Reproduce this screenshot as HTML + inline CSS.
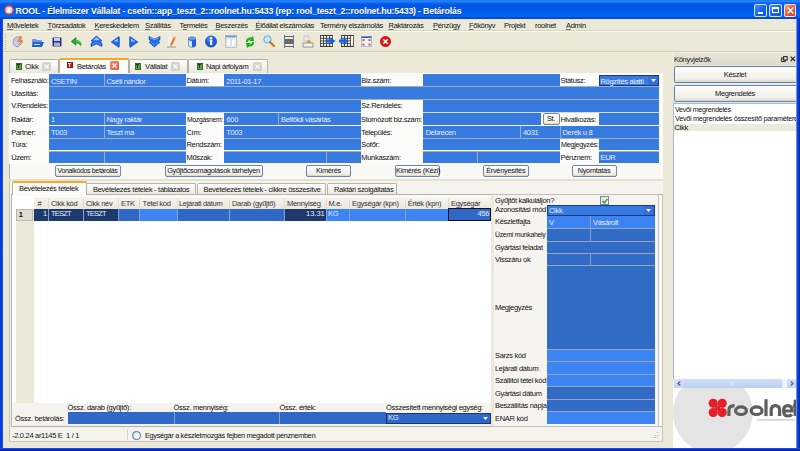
<!DOCTYPE html><html><head><meta charset="utf-8"><style>
*{margin:0;padding:0;box-sizing:border-box}
html,body{width:800px;height:451px;overflow:hidden;background:#ece9d8;position:relative;font-family:"Liberation Sans",sans-serif;font-size:7.5px;letter-spacing:-0.3px;color:#111}
div,span,svg{position:absolute}
.t{white-space:nowrap;line-height:8px}
.w{color:#eef3fc}
.btn{font-size:7.4px;border:1px solid #6a86b0;border-radius:2px;background:linear-gradient(#fdfdfb,#f0efe8 80%,#d8d5c8);text-align:center;line-height:10px;white-space:nowrap}
u{text-decoration:underline;text-decoration-color:#666;text-decoration-thickness:0.6px;text-underline-offset:1px}
</style></head><body>
<div style="left:0px;top:0px;width:800px;height:18.8px;background:linear-gradient(#1a74e0 0px,#2a88ff 1.2px,#0a64f2 3px,#0056e2 5.5px,#005ae8 10px,#0066f8 14.5px,#0062f2 16.5px,#0046d6 18px,#0a48c8 18.8px)"></div>
<svg style="left:4px;top:5px" width="10" height="10"><circle cx="5" cy="5" r="4.3" fill="#c8d8ee" stroke="#e23a2c" stroke-width="1.4"/><path d="M2.5 7.5 Q3 3 7 2.5 Q5 5 6.5 7.5Z" fill="#f4f8ff"/></svg>
<span class="t" style="left:15.5px;top:6.6px;color:#fff;font-weight:bold;font-size:8.8px;letter-spacing:-0.2px;line-height:9px;text-shadow:0.6px 0.6px 0 #0a3aa0">ROOL - Élelmiszer Vállalat - csetin::app_teszt_2::roolnet.hu:5433 (rep: rool_teszt_2::roolnet.hu:5433) - Betárolás</span>
<div style="left:754.3px;top:3.8px;width:12.6px;height:12.8px;border:1px solid rgba(255,255,255,.8);border-radius:2px;background:linear-gradient(135deg,#4a90ff,#1862f0 55%,#0c52dc)"></div>
<div style="left:769.3px;top:3.8px;width:12.6px;height:12.8px;border:1px solid rgba(255,255,255,.8);border-radius:2px;background:linear-gradient(135deg,#4a90ff,#1862f0 55%,#0c52dc)"></div>
<div style="left:783.6px;top:3.8px;width:12.6px;height:12.8px;border:1px solid rgba(255,255,255,.8);border-radius:2px;background:linear-gradient(135deg,#f4a486,#e45c34 50%,#d04424)"></div>
<div style="left:757.5px;top:11.5px;width:5px;height:2px;background:#fff"></div>
<div style="left:772.3px;top:6.8px;width:6.6px;height:6.6px;border:1px solid #fff;border-top-width:2px"></div>
<svg style="left:786.8px;top:7px" width="7" height="7"><path d="M0.6 0.6L6.4 6.4M6.4 0.6L0.6 6.4" stroke="#fff" stroke-width="1.4"/></svg>
<span class="t" style="left:7px;top:21.6px;"><u>M</u>űveletek</span>
<span class="t" style="left:47.5px;top:21.6px;"><u>T</u>örzsadatok</span>
<span class="t" style="left:94.5px;top:21.6px;"><u>K</u>ereskedelem</span>
<span class="t" style="left:145px;top:21.6px;"><u>S</u>zállítás</span>
<span class="t" style="left:179.5px;top:21.6px;">T<u>e</u>rmelés</span>
<span class="t" style="left:215.5px;top:21.6px;"><u>B</u>eszerzés</span>
<span class="t" style="left:255.5px;top:21.6px;"><u>É</u>lőállat elszámolás</span>
<span class="t" style="left:320px;top:21.6px;">Termény elszámolás</span>
<span class="t" style="left:388.5px;top:21.6px;"><u>R</u>aktározás</span>
<span class="t" style="left:433px;top:21.6px;"><u>P</u>énzügy</span>
<span class="t" style="left:469px;top:21.6px;"><u>F</u>őkönyv</span>
<span class="t" style="left:504px;top:21.6px;">Projekt</span>
<span class="t" style="left:535px;top:21.6px;">roolnet</span>
<span class="t" style="left:566px;top:21.6px;"><u>A</u>dmin</span>
<div style="left:3px;top:30px;width:794px;height:1px;background:#d8d4c0"></div>
<div style="left:3px;top:31px;width:794px;height:1px;background:#fbfaf5"></div>
<div style="left:3px;top:51.2px;width:794px;height:1.0px;background:#cfcbb8"></div>
<div style="left:3px;top:52.2px;width:794px;height:1.0px;background:#f1eee2"></div>
<div style="left:5px;top:34px;width:1px;height:1px;background:#b8b4a0"></div>
<div style="left:5px;top:36px;width:1px;height:1px;background:#b8b4a0"></div>
<div style="left:5px;top:38px;width:1px;height:1px;background:#b8b4a0"></div>
<div style="left:5px;top:40px;width:1px;height:1px;background:#b8b4a0"></div>
<div style="left:5px;top:42px;width:1px;height:1px;background:#b8b4a0"></div>
<div style="left:5px;top:44px;width:1px;height:1px;background:#b8b4a0"></div>
<div style="left:5px;top:46px;width:1px;height:1px;background:#b8b4a0"></div>
<div style="left:5px;top:48px;width:1px;height:1px;background:#b8b4a0"></div>
<svg style="left:12px;top:35px" width="13" height="13" viewBox="0 0 13 13"><path d="M2 4 Q6 0 10 3 L8 6 L11 7 L6 12 Q1 11 1 7Z" fill="#c8c8f0" stroke="#8a8ac8" stroke-width="0.8"/><path d="M8 1 L5 7 L8 7 L6 12 L11 5 L8 5 L10 1Z" fill="#f08a18"/></svg>
<svg style="left:31px;top:36px" width="13" height="12" viewBox="0 0 13 12"><path d="M1 3 h4 l1 1 h5 v7 h-10z" fill="#6a9ae8"/><path d="M2 6 h11 l-2 5 h-10z" fill="#1f5fe0"/><rect x="3" y="8" width="6" height="1" fill="#cfe0ff"/><path d="M6 1 l4 0 l0 2z" fill="#d0e0f8"/></svg>
<svg style="left:52px;top:37px" width="10" height="10" viewBox="0 0 10 10"><rect x="0.5" y="0.5" width="9" height="9" rx="1" fill="#28307a"/><rect x="2" y="1" width="6" height="3" fill="#c8d0ee"/><rect x="2" y="5.5" width="6" height="3.5" fill="#a8b0d8"/></svg>
<svg style="left:70px;top:35px" width="13" height="13" viewBox="0 0 13 13"><path d="M11 10.5 Q11.5 5.5 6 5.2 L6 2.5 L1.2 6.5 L6 10.2 L6 7.8 Q9 7.8 11 10.5Z" fill="#20b020" stroke="#0a7a0a" stroke-width="0.6" stroke-linejoin="round"/><path d="M6 5.8 Q9.5 6 10.5 8.5" stroke="#a0f0a0" stroke-width="0.6" fill="none"/></svg>
<svg style="left:89.5px;top:35px" width="13" height="13" viewBox="0 0 13 13"><path d="M6.5 1 L12 5.8 L10 6.6 L12 8.4 L12 11.6 L6.5 9 L1 11.6 L1 8.4 L3 6.6 L1 5.8Z" fill="#1e6ae8" stroke="#0c44b8" stroke-width="0.6" stroke-linejoin="round"/><path d="M6.5 2.2 L10 5.2 L3 5.2Z" fill="#9cc8ff"/><path d="M2 9.5 L6.5 7.3 L11 9.5" stroke="#7cb0ff" stroke-width="0.6" fill="none"/></svg>
<svg style="left:110px;top:35.5px" width="10" height="12" viewBox="0 0 10 12"><path d="M1.2 6 L8.6 0.8 Q9.3 0.6 9.3 1.5 L9.3 10.5 Q9.3 11.4 8.6 11.2Z" fill="#1e6ae8" stroke="#0c44b8" stroke-width="0.7" stroke-linejoin="round"/><path d="M3.5 5.5 L8 2.5 L8 5.5Z" fill="#a0c8ff"/></svg>
<svg style="left:129px;top:35.5px" width="10" height="12" viewBox="0 0 10 12"><path d="M8.8 6 L1.4 0.8 Q0.7 0.6 0.7 1.5 L0.7 10.5 Q0.7 11.4 1.4 11.2Z" fill="#1e6ae8" stroke="#0c44b8" stroke-width="0.7" stroke-linejoin="round"/><path d="M2 2.5 L6.5 5.5 L2 5.5Z" fill="#a0c8ff"/></svg>
<svg style="left:147.5px;top:35px" width="13" height="13" viewBox="0 0 13 13"><path d="M6.5 12 L12 7.2 L10 6.4 L12 4.6 L12 1.4 L6.5 4 L1 1.4 L1 4.6 L3 6.4 L1 7.2Z" fill="#1e6ae8" stroke="#0c44b8" stroke-width="0.6" stroke-linejoin="round"/><path d="M2 2.6 L6.5 4.8 L11 2.6" stroke="#9cc8ff" stroke-width="0.8" fill="none"/><path d="M3 7.4 L6.5 9.6 L10 7.4" stroke="#7cb0ff" stroke-width="0.6" fill="none"/></svg>
<svg style="left:167px;top:35px" width="10" height="13" viewBox="0 0 10 13"><rect x="1" y="2" width="7" height="10" fill="#f4f2f8"/><path d="M3 10 L7 1 L9 2 L5 11Z" fill="#f07a10"/><path d="M7 1 L9 2 L8.5 3 L6.5 2Z" fill="#e0e0e0"/><rect x="0" y="11.5" width="9" height="1" fill="#909090"/></svg>
<svg style="left:187px;top:36px" width="10" height="12" viewBox="0 0 10 12"><path d="M1 2 Q5 -1 9 2 L9 10 Q5 13 1 10Z" fill="#1f5fd8"/><ellipse cx="5" cy="2.2" rx="4" ry="1.6" fill="#6a9af0"/><path d="M1.5 4 Q3 5 5 5 L5 11 Q3 11 1.5 10Z" fill="#d8e6fa"/></svg>
<svg style="left:205px;top:35px" width="12" height="13" viewBox="0 0 12 13"><circle cx="6" cy="6.5" r="5.6" fill="#1a5fe0" stroke="#0a3aa0" stroke-width="0.6"/><circle cx="5" cy="4.5" r="3" fill="#5a9aff" opacity="0.6"/><rect x="5" y="5" width="2.2" height="5" fill="#fff"/><circle cx="6.1" cy="3.2" r="1.2" fill="#fff"/></svg>
<svg style="left:225px;top:35px" width="12" height="13" viewBox="0 0 12 13"><rect x="0.5" y="0.5" width="11" height="12" fill="#f2f2f2" stroke="#b0b8c8" stroke-width="0.8"/><rect x="0.5" y="0.5" width="11" height="2" fill="#7a9ae0"/><rect x="2" y="4" width="3.5" height="7" fill="#fff" stroke="#c8c8c8" stroke-width="0.5"/><rect x="6.5" y="4" width="3.5" height="7" fill="#fff" stroke="#c8c8c8" stroke-width="0.5"/></svg>
<svg style="left:244px;top:36px" width="12" height="12" viewBox="0 0 12 12"><path d="M2 6 Q2 1 7 1.5 L9 0 L10 5 L5 5 L7 3.5 Q4 3 4 6Z" fill="#18b018"/><path d="M10 6 Q10 11 5 10.5 L3 12 L2 7 L7 7 L5 8.5 Q8 9 8 6Z" fill="#18b018"/></svg>
<svg style="left:263px;top:35px" width="12" height="13" viewBox="0 0 12 13"><circle cx="4.5" cy="4.5" r="3.7" fill="#bfe8ff" stroke="#6aa8d8" stroke-width="1"/><path d="M7 7 L11 11" stroke="#c87830" stroke-width="2.4" stroke-linecap="round"/></svg>
<svg style="left:283px;top:35px" width="12" height="13" viewBox="0 0 12 13"><rect x="1" y="1" width="10" height="1" fill="#606080"/><rect x="1" y="11" width="10" height="1" fill="#606080"/><rect x="1" y="4" width="10" height="5" fill="#6a6a6a"/><rect x="1" y="0" width="1" height="13" fill="#7070a0"/><rect x="10" y="0" width="1" height="13" fill="#7070a0"/></svg>
<svg style="left:302px;top:35px" width="12" height="13" viewBox="0 0 12 13"><rect x="2" y="1" width="5" height="5" fill="#e8e8ee" stroke="#a8a8b8" stroke-width="0.5"/><circle cx="7" cy="7" r="2" fill="#f0a020"/><rect x="1" y="8" width="10" height="4" fill="#f0f0f0" stroke="#808080" stroke-width="0.8"/></svg>
<svg style="left:320px;top:35px" width="17" height="12" viewBox="0 0 17 12"><rect x="0" y="0" width="13" height="12" fill="#3a3a30"/><rect x="0.8" y="1.0" width="2.2" height="1.8" fill="#f8f8f0"/><rect x="0.8" y="3.7" width="2.2" height="1.8" fill="#f8f8f0"/><rect x="0.8" y="6.4" width="2.2" height="1.8" fill="#f8f8f0"/><rect x="0.8" y="9.100000000000001" width="2.2" height="1.8" fill="#f8f8f0"/><rect x="3.9000000000000004" y="1.0" width="2.2" height="1.8" fill="#f8f8f0"/><rect x="3.9000000000000004" y="3.7" width="2.2" height="1.8" fill="#f8f8f0"/><rect x="3.9000000000000004" y="6.4" width="2.2" height="1.8" fill="#f8f8f0"/><rect x="3.9000000000000004" y="9.100000000000001" width="2.2" height="1.8" fill="#f8f8f0"/><rect x="7.0" y="1.0" width="2.2" height="1.8" fill="#f8f8f0"/><rect x="7.0" y="3.7" width="2.2" height="1.8" fill="#f8f8f0"/><rect x="7.0" y="6.4" width="2.2" height="1.8" fill="#f8f8f0"/><rect x="7.0" y="9.100000000000001" width="2.2" height="1.8" fill="#f8f8f0"/><rect x="10.100000000000001" y="1.0" width="2.2" height="1.8" fill="#f8f8f0"/><rect x="10.100000000000001" y="3.7" width="2.2" height="1.8" fill="#f8f8f0"/><rect x="10.100000000000001" y="6.4" width="2.2" height="1.8" fill="#f8f8f0"/><rect x="10.100000000000001" y="9.100000000000001" width="2.2" height="1.8" fill="#f8f8f0"/><path d="M5.5 4.6 H10.5 V2.6 L15.5 6 L10.5 9.4 V7.4 H5.5Z" fill="#1060f0"/></svg>
<svg style="left:338px;top:35px" width="17" height="12" viewBox="0 0 17 12"><g transform="translate(3,0)"><rect x="0" y="0" width="13" height="12" fill="#3a3a30"/><rect x="0.8" y="1.0" width="2.2" height="1.8" fill="#f8f8f0"/><rect x="0.8" y="3.7" width="2.2" height="1.8" fill="#f8f8f0"/><rect x="0.8" y="6.4" width="2.2" height="1.8" fill="#f8f8f0"/><rect x="0.8" y="9.100000000000001" width="2.2" height="1.8" fill="#f8f8f0"/><rect x="3.9000000000000004" y="1.0" width="2.2" height="1.8" fill="#f8f8f0"/><rect x="3.9000000000000004" y="3.7" width="2.2" height="1.8" fill="#f8f8f0"/><rect x="3.9000000000000004" y="6.4" width="2.2" height="1.8" fill="#f8f8f0"/><rect x="3.9000000000000004" y="9.100000000000001" width="2.2" height="1.8" fill="#f8f8f0"/><rect x="7.0" y="1.0" width="2.2" height="1.8" fill="#f8f8f0"/><rect x="7.0" y="3.7" width="2.2" height="1.8" fill="#f8f8f0"/><rect x="7.0" y="6.4" width="2.2" height="1.8" fill="#f8f8f0"/><rect x="7.0" y="9.100000000000001" width="2.2" height="1.8" fill="#f8f8f0"/><rect x="10.100000000000001" y="1.0" width="2.2" height="1.8" fill="#f8f8f0"/><rect x="10.100000000000001" y="3.7" width="2.2" height="1.8" fill="#f8f8f0"/><rect x="10.100000000000001" y="6.4" width="2.2" height="1.8" fill="#f8f8f0"/><rect x="10.100000000000001" y="9.100000000000001" width="2.2" height="1.8" fill="#f8f8f0"/><rect x="10" y="2" width="2" height="8" fill="#fff"/></g><path d="M1 4.6 H5.5 V2.6 L10.5 6 L5.5 9.4 V7.4 H1Z" fill="#1060f0"/></svg>
<svg style="left:361px;top:36px" width="11" height="11" viewBox="0 0 11 11"><rect x="0.5" y="0.5" width="10" height="10" fill="#f4f4fa" stroke="#9ab0e0" stroke-width="0.8"/><rect x="0.5" y="0.5" width="10" height="1.5" fill="#2a5ad8"/><rect x="1.5" y="3" width="2" height="2" fill="#e05030"/><rect x="7.5" y="3" width="2" height="2" fill="#e05030"/><rect x="1.5" y="7.5" width="2" height="2" fill="#e05030"/><rect x="7.5" y="7.5" width="2" height="2" fill="#e05030"/></svg>
<svg style="left:380px;top:36px" width="11" height="11" viewBox="0 0 11 11"><circle cx="5.5" cy="5.5" r="5.2" fill="#e41010" stroke="#b00000" stroke-width="0.5"/><path d="M3.3 3.3 L7.7 7.7 M7.7 3.3 L3.3 7.7" stroke="#fff" stroke-width="1.6"/></svg>
<div style="left:9px;top:59px;width:50px;height:14px;border:1px solid #b0b0a4;border-bottom:none;border-radius:2px 2px 0 0;background:linear-gradient(#fdfdfc,#f2f1eb 60%,#e8e6dc)"></div>
<div style="left:16px;top:62.8px;width:5.6px;height:6.8px;background:#58a848;border:0.6px solid rgba(0,0,0,.35)"></div>
<div style="left:17.3px;top:64.39999999999999px;width:3px;height:1px;background:#203818"></div>
<div style="left:18.3px;top:64.39999999999999px;width:1px;height:3.8px;background:#203818"></div>
<span class="t" style="left:25px;top:62.8px;">Cikk</span>
<div style="left:42px;top:62px;width:9px;height:8.6px;background:#d6d2c6;border-radius:1.5px"></div>
<svg style="left:44px;top:63.8px" width="5" height="5"><path d="M0.5 0.5L4.5 4.5M4.5 0.5L0.5 4.5" stroke="#fff" stroke-width="1.1"/></svg>
<div style="left:129px;top:59px;width:59px;height:14px;border:1px solid #b0b0a4;border-bottom:none;border-radius:2px 2px 0 0;background:linear-gradient(#fdfdfc,#f2f1eb 60%,#e8e6dc)"></div>
<div style="left:135px;top:62.8px;width:5.6px;height:6.8px;background:#58a848;border:0.6px solid rgba(0,0,0,.35)"></div>
<div style="left:136.3px;top:64.39999999999999px;width:3px;height:1px;background:#203818"></div>
<div style="left:137.3px;top:64.39999999999999px;width:1px;height:3.8px;background:#203818"></div>
<span class="t" style="left:145px;top:62.8px;">Vállalat</span>
<div style="left:171px;top:62px;width:9px;height:8.6px;background:#d6d2c6;border-radius:1.5px"></div>
<svg style="left:173px;top:63.8px" width="5" height="5"><path d="M0.5 0.5L4.5 4.5M4.5 0.5L0.5 4.5" stroke="#fff" stroke-width="1.1"/></svg>
<div style="left:188px;top:59px;width:80px;height:14px;border:1px solid #b0b0a4;border-bottom:none;border-radius:2px 2px 0 0;background:linear-gradient(#fdfdfc,#f2f1eb 60%,#e8e6dc)"></div>
<div style="left:197px;top:62.8px;width:5.6px;height:6.8px;background:#58a848;border:0.6px solid rgba(0,0,0,.35)"></div>
<div style="left:198.3px;top:64.39999999999999px;width:3px;height:1px;background:#203818"></div>
<div style="left:199.3px;top:64.39999999999999px;width:1px;height:3.8px;background:#203818"></div>
<span class="t" style="left:206px;top:62.8px;">Napi árfolyam</span>
<div style="left:253px;top:62px;width:9px;height:8.6px;background:#d6d2c6;border-radius:1.5px"></div>
<svg style="left:255px;top:63.8px" width="5" height="5"><path d="M0.5 0.5L4.5 4.5M4.5 0.5L0.5 4.5" stroke="#fff" stroke-width="1.1"/></svg>
<div style="left:58.8px;top:57.8px;width:70px;height:15.5px;border:1px solid #b0b0a4;border-bottom:none;border-radius:2px 2px 0 0;background:#fbfbf9"></div>
<div style="left:59px;top:57.8px;width:69.80000000000001px;height:1.8000000000000043px;background:#f5a830;border-radius:2px 2px 0 0"></div>
<div style="left:67px;top:61.6px;width:5.6px;height:6.8px;background:#c82828;border:0.6px solid rgba(0,0,0,.35)"></div>
<div style="left:68.3px;top:63.2px;width:3px;height:1px;background:#f0d8c8"></div>
<div style="left:69.3px;top:63.2px;width:1px;height:3.8px;background:#f0d8c8"></div>
<span class="t" style="left:77px;top:62.6px;">Betárolás</span>
<div style="left:110px;top:61.2px;width:9px;height:8.6px;background:linear-gradient(135deg,#f08a68,#e05a38);border-radius:1.5px"></div>
<svg style="left:112px;top:63.0px" width="5" height="5"><path d="M0.5 0.5L4.5 4.5M4.5 0.5L0.5 4.5" stroke="#fff" stroke-width="1.1"/></svg>
<div style="left:8.5px;top:72.5px;width:655px;height:107px;border:1px solid #b0aea0;border-top-color:#a8a89c;background:#f8f8f4"></div>
<div style="left:59px;top:72.6px;width:70px;height:1.4000000000000057px;background:#fbfbf8"></div>
<div style="left:9px;top:73px;width:654px;height:91px;background:#fbfbfa"></div>
<div style="left:49px;top:74.4px;width:137px;height:11.799999999999997px;background:#377ae0"></div>
<div style="left:103.8px;top:74.4px;width:1.0px;height:11.799999999999997px;background:#a5adb9"></div>
<span class="t" style="left:51px;top:77.7px;color:#e6edfb">CSETIN</span>
<span class="t" style="left:106.5px;top:77.7px;color:#e6edfb">Cséti nándor</span>
<div style="left:224.3px;top:74.4px;width:136.7px;height:11.799999999999997px;background:#377ae0"></div>
<span class="t" style="left:226.3px;top:77.7px;color:#e6edfb;">2011-01-17</span>
<div style="left:423px;top:74.4px;width:137px;height:11.799999999999997px;background:#377ae0"></div>
<div style="left:598.5px;top:74.6px;width:60.5px;height:11.8px;background:#377ae0;border:1px solid #1a3a88"></div>
<span class="t" style="left:600.5px;top:77.7px;color:#e6edfb">Rögzítés alatti</span>
<div style="left:647.5px;top:75.6px;width:10.5px;height:9.8px;background:#3470d8"></div>
<svg style="left:650.5px;top:79px" width="5" height="3"><path d="M0 0H5L2.5 3Z" fill="#fff"/></svg>
<div style="left:49px;top:87px;width:610px;height:11.599999999999994px;background:#377ae0"></div>
<div style="left:49px;top:99.4px;width:312px;height:12.199999999999989px;background:#377ae0"></div>
<div style="left:423px;top:99.4px;width:236px;height:12.199999999999989px;background:#377ae0"></div>
<div style="left:49px;top:113.2px;width:137px;height:11.599999999999994px;background:#377ae0"></div>
<div style="left:103.8px;top:113.2px;width:1.0px;height:11.599999999999994px;background:#a5adb9"></div>
<span class="t" style="left:51px;top:115.9px;color:#e6edfb">1</span>
<span class="t" style="left:106.5px;top:115.9px;color:#e6edfb">Nagy raktár</span>
<div style="left:224.3px;top:113.2px;width:136.7px;height:11.599999999999994px;background:#377ae0"></div>
<div style="left:277.9px;top:113.2px;width:1.0px;height:11.599999999999994px;background:#a5adb9"></div>
<span class="t" style="left:226.5px;top:115.9px;color:#e6edfb">600</span>
<span class="t" style="left:281px;top:115.9px;color:#e6edfb">Belföldi vásárlás</span>
<div style="left:423px;top:113.2px;width:118px;height:11.599999999999994px;background:#377ae0"></div>
<div class="btn" style="left:542.5px;top:112.5px;width:17px;height:12px;line-height:10px;border-color:#7a88a0">St.</div>
<div style="left:598.5px;top:113.2px;width:60.5px;height:11.599999999999994px;background:#377ae0"></div>
<div style="left:49px;top:126px;width:137px;height:12.099999999999994px;background:#377ae0"></div>
<div style="left:103.8px;top:126px;width:1.0px;height:12.099999999999994px;background:#a5adb9"></div>
<span class="t" style="left:51px;top:129.1px;color:#e6edfb">T003</span>
<span class="t" style="left:106.5px;top:129.1px;color:#e6edfb">Teszt ma</span>
<div style="left:224.3px;top:126px;width:136.7px;height:12.099999999999994px;background:#377ae0"></div>
<span class="t" style="left:226.3px;top:129.1px;color:#e6edfb;">T003</span>
<div style="left:423px;top:126px;width:236px;height:12.099999999999994px;background:#377ae0"></div>
<div style="left:520.3px;top:126px;width:1.0px;height:12.099999999999994px;background:#a5adb9"></div>
<div style="left:559.8px;top:126px;width:1.0px;height:12.099999999999994px;background:#9aa6ba"></div>
<span class="t" style="left:425.5px;top:129.1px;color:#e6edfb">Debrecen</span>
<span class="t" style="left:523px;top:129.1px;color:#e6edfb">4031</span>
<span class="t" style="left:562.5px;top:129.1px;color:#e6edfb">Derék u 8</span>
<div style="left:49px;top:138.9px;width:137px;height:11.599999999999994px;background:#377ae0"></div>
<div style="left:224.3px;top:138.9px;width:136.7px;height:11.599999999999994px;background:#377ae0"></div>
<div style="left:423px;top:138.9px;width:137px;height:11.599999999999994px;background:#377ae0"></div>
<div style="left:598.5px;top:138.9px;width:60.5px;height:11.599999999999994px;background:#377ae0"></div>
<div style="left:49px;top:151.3px;width:137px;height:11.699999999999989px;background:#377ae0"></div>
<div style="left:103.8px;top:151.3px;width:1.0px;height:11.699999999999989px;background:#a5adb9"></div>
<div style="left:224.3px;top:151.3px;width:136.7px;height:11.699999999999989px;background:#377ae0"></div>
<div style="left:326.2px;top:151.3px;width:1.0px;height:11.699999999999989px;background:#a5adb9"></div>
<div style="left:423px;top:151.3px;width:137px;height:11.699999999999989px;background:#377ae0"></div>
<div style="left:477.1px;top:151.3px;width:1.0px;height:11.699999999999989px;background:#a5adb9"></div>
<div style="left:598.5px;top:151.3px;width:60.5px;height:11.699999999999989px;background:#377ae0"></div>
<span class="t" style="left:600.5px;top:154.20000000000002px;color:#e6edfb;">EUR</span>
<div style="left:49px;top:86.2px;width:610px;height:0.7999999999999972px;background:#a5adb9"></div>
<div style="left:49px;top:98.6px;width:610px;height:0.8000000000000114px;background:#a5adb9"></div>
<div style="left:49px;top:111.6px;width:312px;height:1.6000000000000085px;background:#d4d8e0"></div>
<div style="left:423px;top:111.6px;width:236px;height:1.6000000000000085px;background:#d4d8e0"></div>
<div style="left:49px;top:138.1px;width:137px;height:0.8000000000000114px;background:#a5adb9"></div>
<div style="left:224.3px;top:138.1px;width:136.7px;height:0.8000000000000114px;background:#a5adb9"></div>
<div style="left:423px;top:138.1px;width:236px;height:0.8000000000000114px;background:#a5adb9"></div>
<div style="left:49px;top:150.5px;width:137px;height:0.8000000000000114px;background:#a5adb9"></div>
<div style="left:224.3px;top:150.5px;width:136.7px;height:0.8000000000000114px;background:#a5adb9"></div>
<div style="left:423px;top:150.5px;width:137px;height:0.8000000000000114px;background:#a5adb9"></div>
<div style="left:598.5px;top:150.5px;width:60.5px;height:0.8000000000000114px;background:#a5adb9"></div>
<span class="t" style="left:11.2px;top:77.3px;;transform:scaleX(0.96);transform-origin:0 0">Felhasználó:</span>
<span class="t" style="left:11.2px;top:89.7px;">Utasítás:</span>
<span class="t" style="left:11.2px;top:102.3px;">V.Rendelés:</span>
<span class="t" style="left:11.2px;top:115.5px;">Raktár:</span>
<span class="t" style="left:11.2px;top:128.7px;">Partner:</span>
<span class="t" style="left:11.2px;top:141.2px;">Túra:</span>
<span class="t" style="left:11.2px;top:153.8px;">Üzem:</span>
<span class="t" style="left:186.5px;top:77.3px;">Dátum:</span>
<span class="t" style="left:186.5px;top:115.5px;;transform:scaleX(0.9);transform-origin:0 0">Mozgásnem:</span>
<span class="t" style="left:186.5px;top:128.7px;">Cím:</span>
<span class="t" style="left:186.5px;top:141.2px;">Rendszám:</span>
<span class="t" style="left:186.5px;top:153.8px;">Műszak:</span>
<span class="t" style="left:361.3px;top:77.3px;">Biz.szám:</span>
<span class="t" style="left:361.3px;top:102.3px;">Sz.Rendelés:</span>
<span class="t" style="left:361.3px;top:115.5px;;transform:scaleX(0.985);transform-origin:0 0">Stornózott biz.szám:</span>
<span class="t" style="left:361.3px;top:128.7px;">Település:</span>
<span class="t" style="left:361.3px;top:141.2px;">Sofőr:</span>
<span class="t" style="left:361.3px;top:153.8px;">Munkaszám:</span>
<span class="t" style="left:560.5px;top:77.3px;">Státusz:</span>
<span class="t" style="left:560.5px;top:115.5px;">Hivatkozás:</span>
<span class="t" style="left:560.5px;top:141.2px;;transform:scaleX(0.965);transform-origin:0 0">Megjegyzés:</span>
<span class="t" style="left:560.5px;top:153.8px;">Pénznem:</span>
<div class="btn" style="left:54.5px;top:164.5px;width:66.0px;height:12.4px;line-height:10.4px;font-size:7px;letter-spacing:-0.35px">Vonalkódos betárolás</div>
<div class="btn" style="left:164.5px;top:164.5px;width:98.0px;height:12.4px;line-height:10.4px">Gyűjtőcsomagolások tárhelyen</div>
<div class="btn" style="left:306px;top:164.5px;width:45px;height:12.4px;line-height:10.4px">Kimérés</div>
<div class="btn" style="left:395px;top:164.5px;width:44.5px;height:12.4px;line-height:10.4px">Kimérés (Kézi)</div>
<div class="btn" style="left:483px;top:164.5px;width:45.5px;height:12.4px;line-height:10.4px">Érvényesítés</div>
<div class="btn" style="left:571.5px;top:164.5px;width:45.0px;height:12.4px;line-height:10.4px">Nyomtatás</div>
<div style="left:8.5px;top:179.5px;width:655px;height:262px;border:1px solid #c4c2b4;border-top:none;background:#f4f3ee"></div>
<div style="left:9px;top:179px;width:654px;height:1.5px;background:#e6e2cc"></div>
<div style="left:86px;top:182.5px;width:109.5px;height:12px;border:1px solid #b4b4a8;border-bottom:none;border-radius:2px 2px 0 0;background:linear-gradient(#fdfdfc,#f2f1eb 60%,#e8e6dc)"></div>
<span class="t" style="left:93px;top:185.5px;">Bevételezés tételek - táblázatos</span>
<div style="left:197px;top:182.5px;width:128.5px;height:12px;border:1px solid #b4b4a8;border-bottom:none;border-radius:2px 2px 0 0;background:linear-gradient(#fdfdfc,#f2f1eb 60%,#e8e6dc)"></div>
<span class="t" style="left:203.5px;top:185.5px;">Bevételezés tételek - cikkre összesítve</span>
<div style="left:327px;top:182.5px;width:70px;height:12px;border:1px solid #b4b4a8;border-bottom:none;border-radius:2px 2px 0 0;background:linear-gradient(#fdfdfc,#f2f1eb 60%,#e8e6dc)"></div>
<span class="t" style="left:334px;top:185.5px;">Raktári szolgáltatás</span>
<div style="left:11px;top:193.8px;width:652px;height:233px;border:1px solid #b4b4a8;background:#f9f8f5"></div>
<div style="left:12px;top:181px;width:74.5px;height:14px;border:1px solid #b4b4a8;border-bottom:none;border-radius:2px 2px 0 0;background:#fbfbf9"></div>
<div style="left:12.5px;top:181px;width:73.5px;height:2px;background:#f5a830;border-radius:2px 2px 0 0"></div>
<span class="t" style="left:19px;top:185px;">Bevételezés tételek</span>
<div style="left:12px;top:196px;width:479px;height:206.5px;background:#fff"></div>
<div style="left:15.5px;top:209px;width:18.5px;height:193.5px;background:#ebe8d8"></div>
<div style="left:15.8px;top:208.8px;width:17.7px;height:12.199999999999989px;background:#dddcd4;border:1px solid #b8b7ac"></div>
<span class="t" style="left:18.8px;top:211px;font-weight:bold">1</span>
<div style="left:34px;top:197px;width:457px;height:11.6px;background:linear-gradient(#f5f4ee,#ebe9dd)"></div>
<span class="t" style="left:37.5px;top:199.6px;color:#333">#</span>
<span class="t" style="left:51px;top:199.6px;color:#333">Cikk kód</span>
<span class="t" style="left:86px;top:199.6px;color:#333">Cikk név</span>
<span class="t" style="left:121px;top:199.6px;color:#333">ETK</span>
<span class="t" style="left:142.4px;top:199.6px;color:#333">Tétel kód</span>
<span class="t" style="left:179px;top:199.6px;color:#333">Lejárati dátum</span>
<span class="t" style="left:232px;top:199.6px;color:#333">Darab (gyűjtő)</span>
<span class="t" style="left:287px;top:199.6px;color:#333">Mennyiség</span>
<span class="t" style="left:328.6px;top:199.6px;color:#333">M.e.</span>
<span class="t" style="left:352px;top:199.6px;color:#333">Egységár (kpn)</span>
<span class="t" style="left:407.8px;top:199.6px;color:#333">Érték (kpn)</span>
<span class="t" style="left:451px;top:199.6px;color:#333">Egységár</span>
<div style="left:47.9px;top:198.5px;width:1.0px;height:9.5px;background:#dcd9cb"></div>
<div style="left:82.5px;top:198.5px;width:1.0px;height:9.5px;background:#dcd9cb"></div>
<div style="left:117.5px;top:198.5px;width:1.0px;height:9.5px;background:#dcd9cb"></div>
<div style="left:138.5px;top:198.5px;width:1.0px;height:9.5px;background:#dcd9cb"></div>
<div style="left:176.5px;top:198.5px;width:1.0px;height:9.5px;background:#dcd9cb"></div>
<div style="left:229.1px;top:198.5px;width:1.0px;height:9.5px;background:#dcd9cb"></div>
<div style="left:283.9px;top:198.5px;width:1.0px;height:9.5px;background:#dcd9cb"></div>
<div style="left:325.5px;top:198.5px;width:1.0px;height:9.5px;background:#dcd9cb"></div>
<div style="left:349.2px;top:198.5px;width:1.0px;height:9.5px;background:#dcd9cb"></div>
<div style="left:405.1px;top:198.5px;width:1.0px;height:9.5px;background:#dcd9cb"></div>
<div style="left:447.9px;top:198.5px;width:1.0px;height:9.5px;background:#dcd9cb"></div>
<div style="left:34px;top:208.6px;width:14.399999999999999px;height:12.400000000000006px;background:#1d3a6e"></div>
<div style="left:48.4px;top:208.6px;width:34.6px;height:12.400000000000006px;background:#1d3a6e"></div>
<div style="left:83px;top:208.6px;width:35px;height:12.400000000000006px;background:#1d3a6e"></div>
<div style="left:118px;top:208.6px;width:21px;height:12.400000000000006px;background:#3068c8"></div>
<div style="left:139px;top:208.6px;width:38px;height:12.400000000000006px;background:#3c84f2"></div>
<div style="left:177px;top:208.6px;width:52.599999999999994px;height:12.400000000000006px;background:#3068c8"></div>
<div style="left:229.6px;top:208.6px;width:54.79999999999998px;height:12.400000000000006px;background:#3068c8"></div>
<div style="left:284.4px;top:208.6px;width:41.60000000000002px;height:12.400000000000006px;background:#1d3a6e"></div>
<div style="left:326px;top:208.6px;width:23.69999999999999px;height:12.400000000000006px;background:#3c84f2"></div>
<div style="left:349.7px;top:208.6px;width:55.900000000000034px;height:12.400000000000006px;background:#3c84f2"></div>
<div style="left:405.6px;top:208.6px;width:42.799999999999955px;height:12.400000000000006px;background:#3c84f2"></div>
<div style="left:448.4px;top:208.6px;width:42.60000000000002px;height:12.400000000000006px;background:#3068c8"></div>
<div style="left:47.9px;top:208.6px;width:1.0px;height:12.400000000000006px;background:#8aa0cc"></div>
<div style="left:82.5px;top:208.6px;width:1.0px;height:12.400000000000006px;background:#8aa0cc"></div>
<div style="left:117.5px;top:208.6px;width:1.0px;height:12.400000000000006px;background:#8aa0cc"></div>
<div style="left:138.5px;top:208.6px;width:1.0px;height:12.400000000000006px;background:#8aa0cc"></div>
<div style="left:176.5px;top:208.6px;width:1.0px;height:12.400000000000006px;background:#8aa0cc"></div>
<div style="left:229.1px;top:208.6px;width:1.0px;height:12.400000000000006px;background:#8aa0cc"></div>
<div style="left:283.9px;top:208.6px;width:1.0px;height:12.400000000000006px;background:#8aa0cc"></div>
<div style="left:325.5px;top:208.6px;width:1.0px;height:12.400000000000006px;background:#8aa0cc"></div>
<div style="left:349.2px;top:208.6px;width:1.0px;height:12.400000000000006px;background:#8aa0cc"></div>
<div style="left:405.1px;top:208.6px;width:1.0px;height:12.400000000000006px;background:#8aa0cc"></div>
<div style="left:447.9px;top:208.6px;width:1.0px;height:12.400000000000006px;background:#8aa0cc"></div>
<div style="left:448.2px;top:208.4px;width:42.8px;height:12.8px;border:1.3px solid #0c1424"></div>
<span class="t" style="left:43px;top:210px;color:#e4ebf8">1</span>
<span class="t" style="left:51px;top:210px;color:#e4ebf8;letter-spacing:-0.8px">TESZT</span>
<span class="t" style="left:86px;top:210px;color:#e4ebf8;letter-spacing:-0.8px">TESZT</span>
<span class="t" style="left:306px;top:210px;color:#e4ebf8;letter-spacing:0px">13.31</span>
<span class="t" style="left:328px;top:210px;color:#e4ebf8">KG</span>
<span class="t" style="left:477.5px;top:210px;color:#e4ebf8">456</span>
<div style="left:491px;top:193.8px;width:168px;height:233.2px;border:1px solid #c4c2b8;border-left:none;background:#f5f4f0"></div>
<div style="left:491px;top:196px;width:3.1999999999999886px;height:230px;background:#ebe9dc"></div>
<span class="t" style="left:495px;top:197.3px;">Gyűjtőt kalkuláljon?</span>
<span class="t" style="left:495px;top:206.3px;">Azonosítási mód</span>
<div style="left:600px;top:196px;width:9px;height:9px;border:1px solid #7c8aa4;background:linear-gradient(135deg,#dcdcd6,#fbfbf8)"></div>
<svg style="left:601.5px;top:197.5px" width="6" height="6"><path d="M0.5 3 L2.3 5 L5.5 0.8" stroke="#21a121" stroke-width="1.4" fill="none"/></svg>
<div style="left:547px;top:205px;width:107.5px;height:11px;background:#377ae0;border:1px solid #1a3a88"></div>
<span class="t" style="left:549px;top:206.6px;color:#e4ebf8">Cikk</span>
<div style="left:643.5px;top:206px;width:10px;height:9px;background:#3470d8"></div>
<svg style="left:646px;top:209px" width="5" height="3"><path d="M0 0H5L2.5 3Z" fill="#fff"/></svg>
<div style="left:547px;top:216px;width:108px;height:12px;background:#3d84f3"></div>
<div style="left:590px;top:216px;width:1px;height:12px;background:#8a9cc0"></div>
<span class="t" style="left:495px;top:218.2px;">Készletfajta</span>
<div style="left:547px;top:229px;width:108px;height:11.5px;background:#306bc6"></div>
<div style="left:590px;top:229px;width:1px;height:11.5px;background:#8a9cc0"></div>
<span class="t" style="left:495px;top:231.2px;;transform:scaleX(0.917);transform-origin:0 0">Üzemi munkahely</span>
<div style="left:547px;top:241.5px;width:108px;height:11.5px;background:#306bc6"></div>
<span class="t" style="left:495px;top:243.7px;">Gyártási feladat</span>
<div style="left:547px;top:254px;width:108px;height:11px;background:#306bc6"></div>
<div style="left:590px;top:254px;width:1px;height:11px;background:#8a9cc0"></div>
<span class="t" style="left:495px;top:256.2px;">Visszáru ok</span>
<div style="left:547px;top:228px;width:108px;height:1px;background:#98a4bc"></div>
<div style="left:547px;top:240.5px;width:108px;height:1.0px;background:#98a4bc"></div>
<div style="left:547px;top:253px;width:108px;height:1px;background:#98a4bc"></div>
<div style="left:547px;top:265px;width:108px;height:1px;background:#98a4bc"></div>
<span class="t" style="left:549px;top:218.5px;color:#e4ebf8">V</span>
<span class="t" style="left:593px;top:218.5px;color:#e4ebf8">Vásárolt</span>
<div style="left:547px;top:266px;width:108px;height:82.5px;background:#306bc6"></div>
<span class="t" style="left:495px;top:303.5px;">Megjegyzés</span>
<div style="left:547px;top:349px;width:108px;height:12px;background:#3d84f3"></div>
<span class="t" style="left:495px;top:351.6px;">Sarzs kód</span>
<div style="left:547px;top:362px;width:108px;height:11.5px;background:#3d84f3"></div>
<span class="t" style="left:495px;top:364.6px;">Lejárati dátum</span>
<div style="left:547px;top:374.5px;width:108px;height:11.5px;background:#3d84f3"></div>
<span class="t" style="left:495px;top:377.1px;">Szállítói tétel kód</span>
<div style="left:547px;top:387px;width:108px;height:11.5px;background:#306bc6"></div>
<span class="t" style="left:495px;top:389.6px;">Gyártási dátum</span>
<div style="left:547px;top:399.5px;width:108px;height:11.5px;background:#306bc6"></div>
<span class="t" style="left:495px;top:402.1px;">Beszállítás napja</span>
<div style="left:547px;top:412px;width:108px;height:12px;background:#3d84f3"></div>
<span class="t" style="left:495px;top:414.6px;">ENAR kód</span>
<div style="left:547px;top:348.5px;width:108px;height:1.0px;background:#98a4bc"></div>
<div style="left:547px;top:361px;width:108px;height:1px;background:#98a4bc"></div>
<div style="left:547px;top:373.5px;width:108px;height:1.0px;background:#98a4bc"></div>
<div style="left:547px;top:386px;width:108px;height:1px;background:#98a4bc"></div>
<div style="left:547px;top:398.5px;width:108px;height:1.0px;background:#98a4bc"></div>
<div style="left:547px;top:411px;width:108px;height:1px;background:#98a4bc"></div>
<div style="left:12px;top:402.5px;width:479px;height:23.5px;background:#f4f3ee"></div>
<span class="t" style="left:67.5px;top:404px;">Össz. darab (gyűjtő):</span>
<span class="t" style="left:173.5px;top:404px;">Össz. mennyiség:</span>
<span class="t" style="left:279.5px;top:404px;">Össz. érték:</span>
<span class="t" style="left:386px;top:404px;">Összesített mennyiségi egység:</span>
<span class="t" style="left:15px;top:415px;">Össz. betárolás:</span>
<div style="left:67.5px;top:412px;width:318.5px;height:11.5px;background:#3068c8"></div>
<div style="left:173.5px;top:412px;width:1.0px;height:11.5px;background:#8a9cc0"></div>
<div style="left:279px;top:412px;width:1px;height:11.5px;background:#8a9cc0"></div>
<div style="left:386px;top:412.5px;width:105px;height:11px;background:#3068c8;border:1px solid #1a3470"></div>
<span class="t" style="left:388px;top:414px;color:#e8eefa">KG</span>
<div style="left:480px;top:413.5px;width:10px;height:9px;background:#3068c8"></div>
<svg style="left:482.5px;top:416.5px" width="5" height="3"><path d="M0 0H5L2.5 3Z" fill="#fff"/></svg>
<span class="t" style="left:12px;top:432px;">-2.0.24 ar1145 E&nbsp; 1 / 1</span>
<div style="left:127.3px;top:429px;width:0.7999999999999972px;height:11px;background:#d6d2c2"></div>
<div style="left:132px;top:431px;width:8.6px;height:8.6px;border-radius:50%;border:1px solid #4068a8;background:linear-gradient(135deg,#dcdcd4,#fff)"></div>
<span class="t" style="left:145px;top:432px;;transform:scaleX(0.97);transform-origin:0 0">Egységár a készletmozgás fejben megadott pénznemben</span>
<div style="left:657px;top:432px;width:1.2000000000000455px;height:1.1999999999999886px;background:#b8b4a4"></div>
<div style="left:655px;top:434.5px;width:1.2000000000000455px;height:1.1999999999999886px;background:#b8b4a4"></div>
<div style="left:657px;top:434.5px;width:1.2000000000000455px;height:1.1999999999999886px;background:#b8b4a4"></div>
<div style="left:653px;top:437px;width:1.2000000000000455px;height:1.1999999999999886px;background:#b8b4a4"></div>
<div style="left:655px;top:437px;width:1.2000000000000455px;height:1.1999999999999886px;background:#b8b4a4"></div>
<div style="left:657px;top:437px;width:1.2000000000000455px;height:1.1999999999999886px;background:#b8b4a4"></div>
<div style="left:8.5px;top:440.5px;width:655.5px;height:1.5px;background:#c8c6ba"></div>
<div style="left:662px;top:195px;width:2px;height:247px;background:#c8c6ba"></div>
<div style="left:663px;top:53px;width:9.5px;height:395px;background:#ece9d8"></div>
<div style="left:672.5px;top:52.8px;width:1.0px;height:12.700000000000003px;background:#f8f6ee"></div>
<div style="left:673.5px;top:52.8px;width:123.5px;height:12.700000000000003px;background:linear-gradient(#e8e5d7,#dfdccc)"></div>
<span class="t" style="left:674px;top:55.5px;color:#222">Könyvjelzők</span>
<svg style="left:780.5px;top:56px" width="7" height="6"><rect x="0.6" y="2" width="3.6" height="3.4" fill="none" stroke="#222" stroke-width="1"/><rect x="2.6" y="0.6" width="3.6" height="3.4" fill="#e2dfd0" stroke="#222" stroke-width="1"/></svg>
<svg style="left:789.5px;top:56.3px" width="6" height="6"><path d="M0.7 0.7L5 5M5 0.7L0.7 5" stroke="#222" stroke-width="1.1"/></svg>
<div class="btn" style="left:673.5px;top:65.8px;width:123px;height:17.2px;line-height:15px;border-color:#5f82b4;border-radius:1.5px;font-size:7.5px">Készlet</div>
<div class="btn" style="left:673.5px;top:84.6px;width:123px;height:17.6px;line-height:15.5px;border-color:#5f82b4;border-radius:1.5px;font-size:7.5px">Megrendelés</div>
<div style="left:672.5px;top:102.6px;width:124px;height:286px;background:#fff;border:1px solid #a8b8d0"></div>
<span class="t" style="left:674.5px;top:105.5px;;transform:scaleX(0.95);transform-origin:0 0">Vevői megrendelés</span>
<span class="t" style="left:674.5px;top:114.5px;;transform:scaleX(0.97);transform-origin:0 0">Vevői megrendelés összesítő paraméterei</span>
<div style="left:673.5px;top:123.5px;width:122.5px;height:7.300000000000011px;background:#eceadc"></div>
<span class="t" style="left:674.5px;top:123.5px;">Cikk</span>
<div style="left:673px;top:378.6px;width:123px;height:10.0px;background:#eef2fa"></div>
<div style="left:673.5px;top:378.8px;width:10.299999999999955px;height:9.399999999999977px;background:linear-gradient(#d6e2f8,#c2d4f2)"></div>
<div style="left:684px;top:378.8px;width:97.5px;height:9.399999999999977px;background:linear-gradient(#d0ddf8,#bccff2)"></div>
<div style="left:786.5px;top:378.8px;width:9.5px;height:9.399999999999977px;background:linear-gradient(#d6e2f8,#c2d4f2)"></div>
<div style="left:673px;top:388.2px;width:123px;height:0.8000000000000114px;background:#b0c0dc"></div>
<svg style="left:676.5px;top:381px" width="4" height="5"><path d="M3.3 0.5L1 2.5L3.3 4.5" stroke="#4a66a0" stroke-width="1.2" fill="none"/></svg>
<svg style="left:789.5px;top:381px" width="4" height="5"><path d="M0.7 0.5L3 2.5L0.7 4.5" stroke="#4a66a0" stroke-width="1.2" fill="none"/></svg>
<div style="left:731px;top:382px;width:3px;height:3px;background:repeating-linear-gradient(90deg,#e8eefa 0 1px,transparent 1px 2px)"></div>
<div style="left:673px;top:388px;width:123px;height:60px;background:#fff;overflow:hidden"></div>
<svg style="left:673px;top:388px" width="123" height="60"><circle cx="39.8" cy="25" r="40" fill="#e4e4e4"/></svg>
<svg style="left:700px;top:392px" width="100" height="34"><g fill="#e41e26"><circle cx="13.2" cy="11.3" r="4.6"/><circle cx="22.2" cy="11.3" r="4.6"/><circle cx="13.2" cy="20.5" r="4.6"/><circle cx="22.2" cy="20.5" r="4.6"/><circle cx="17.7" cy="15.9" r="2.6"/></g><g fill="none" stroke="#5e5e5e" stroke-width="3.2"><path d="M28.9 24.1V18Q28.9 13.6 34.5 13.6"/><ellipse cx="41" cy="18.7" rx="5.4" ry="3.8"/><ellipse cx="56.6" cy="18.7" rx="5.4" ry="3.8"/><path d="M66 7.2V24.1"/><path d="M71.2 24.1V18.5Q71.2 13.7 75.4 13.7Q79.6 13.7 79.6 18.5V24.1"/><path d="M83.6 19H92Q92 13.6 87.8 13.6Q83.6 13.6 83.6 18.7Q83.6 24 88 24Q90.8 24 91.8 22.4"/><path d="M95.2 7.7V24.1M92.8 14.2H98"/></g><rect x="57" y="27.2" width="38" height="1.3" fill="#c8c8c8"/></svg>
<div style="left:0px;top:18.6px;width:2.8px;height:432.4px;background:linear-gradient(90deg,#0830d8,#0844e8 60%,#1a5af0)"></div>
<div style="left:796px;top:19px;width:1px;height:432px;background:#6f90e0"></div>
<div style="left:797px;top:19px;width:3px;height:432px;background:linear-gradient(90deg,#0a48e8,#0636d0 60%,#0020b0)"></div>
<div style="left:0px;top:448px;width:800px;height:3px;background:linear-gradient(#2c5ce4,#0a30cc 45%,#0418a8)"></div>
</body></html>
